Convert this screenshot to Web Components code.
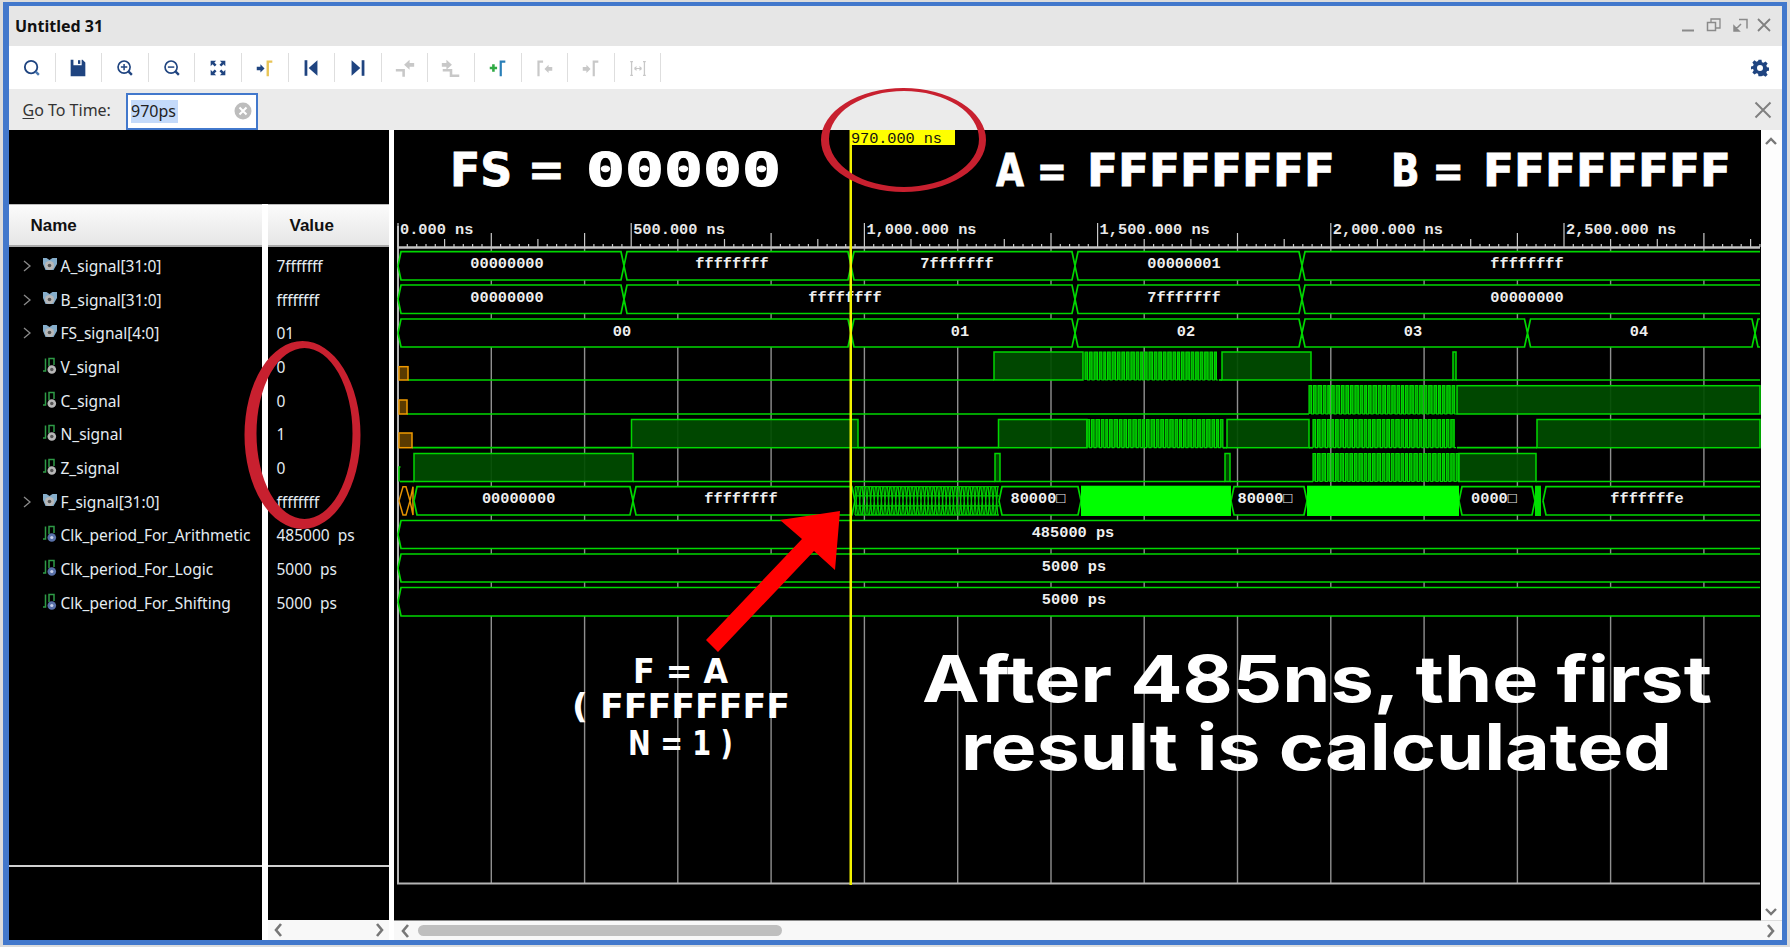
<!DOCTYPE html>
<html>
<head>
<meta charset="utf-8">
<title>Untitled 31</title>
<style>
  html, body { margin: 0; padding: 0; background: #dcdcdc; overflow: hidden; }
  body { font-family: "Noto Sans", "Open Sans", sans-serif; }
</style>
</head>
<body>
<wave-window>
  <title-bar slot="top">Untitled 31</title-bar>
  <tool-bar slot="top"></tool-bar>
  <goto-bar slot="top" value="970ps"></goto-bar>

  <signal-column heading="Name" pad="21.5" foot="75" slot="names">
    <signal-row kind="bus">A_signal[31:0]</signal-row>
    <signal-row kind="bus">B_signal[31:0]</signal-row>
    <signal-row kind="bus">FS_signal[4:0]</signal-row>
    <signal-row kind="bit">V_signal</signal-row>
    <signal-row kind="bit">C_signal</signal-row>
    <signal-row kind="bit">N_signal</signal-row>
    <signal-row kind="bit">Z_signal</signal-row>
    <signal-row kind="bus">F_signal[31:0]</signal-row>
    <signal-row kind="clk">Clk_period_For_Arithmetic</signal-row>
    <signal-row kind="clk">Clk_period_For_Logic</signal-row>
    <signal-row kind="clk">Clk_period_For_Shifting</signal-row>
  </signal-column>

  <signal-column heading="Value" pad="22" foot="55" scroll slot="values">
    <signal-row>7fffffff</signal-row>
    <signal-row>ffffffff</signal-row>
    <signal-row>01</signal-row>
    <signal-row>0</signal-row>
    <signal-row>0</signal-row>
    <signal-row>1</signal-row>
    <signal-row>0</signal-row>
    <signal-row>ffffffff</signal-row>
    <signal-row>485000 ps</signal-row>
    <signal-row>5000 ps</signal-row>
    <signal-row>5000 ps</signal-row>
  </signal-column>

  <wave-view slot="wave"></wave-view>
</wave-window>

<script>
const NAVY = '#1f4480';
const GREY_ICON = '#c8c8c8';

// every toolbar glyph lives in a 24x24 box
const TOOL_ICONS = {
    search: `<circle cx="11" cy="11" r="6.8" fill="none" stroke="${NAVY}" stroke-width="2"/><path d="M16 16l3.5 3.5" stroke="#4a78b0" stroke-width="2.6"/>`,
    save: `<path d="M4 3h3v6h9V3h1l3 3v15H4z" fill="${NAVY}"/><rect x="12" y="3.5" width="2.5" height="4" fill="${NAVY}"/>`,
    zoomIn: `<circle cx="11" cy="11" r="6.6" fill="none" stroke="${NAVY}" stroke-width="1.8"/><path d="M11 7.5v7M7.5 11h7" stroke="${NAVY}" stroke-width="1.6"/><path d="M16 16l3.5 3.5" stroke="${NAVY}" stroke-width="2.6"/>`,
    zoomOut: `<circle cx="11" cy="11" r="6.6" fill="none" stroke="${NAVY}" stroke-width="1.8"/><path d="M7.5 11h7" stroke="${NAVY}" stroke-width="1.6"/><path d="M16 16l3.5 3.5" stroke="${NAVY}" stroke-width="2.6"/>`,
    fit: `<g fill="${NAVY}"><path d="M4 4h6l-2 2 2.4 2.4-2 2L6 8 4 10z"/><path d="M20 4h-6l2 2-2.4 2.4 2 2L18 8l2 2z"/><path d="M4 20h6l-2-2 2.4-2.4-2-2L6 16l-2-2z"/><path d="M20 20h-6l2-2-2.4-2.4 2-2L18 16l2-2z"/></g>`,
    marker: `<path d="M3 10.5h4V8l4.5 4.5L7 17v-2.5H3z" fill="${NAVY}"/><path d="M15 21V5h5" fill="none" stroke="#e8c456" stroke-width="2.6"/>`,
    prev: `<rect x="5" y="3.5" width="3" height="17" fill="${NAVY}"/><path d="M19 3.5v17L9.5 12z" fill="${NAVY}"/>`,
    next: `<rect x="16" y="3.5" width="3" height="17" fill="${NAVY}"/><path d="M5 3.5v17l9.5-8.500z" fill="${NAVY}"/>`,
    risePrev: `<path d="M2 14.500h8.500v7" fill="none" stroke="${GREY_ICON}" stroke-width="2.800"/><path d="M22 6.500h-5V3l-6 5.500 6 5.500v-3.500h5z" fill="${GREY_ICON}"/>`,
    riseNext: `<path d="M3 14.500h9v6h9" fill="none" stroke="${GREY_ICON}" stroke-width="2.800"/><path d="M2 6.500h5V3l6 5.500L7 14v-3.500H2z" fill="${GREY_ICON}"/>`,
    addMarker: `<path d="M3 12h8M7 8v8" stroke="#2faa44" stroke-width="2.8"/><path d="M15 21V5h5" fill="none" stroke="#2a7fb8" stroke-width="2.4"/>`,
    markPrev: `<path d="M6 21V5h5" fill="none" stroke="${GREY_ICON}" stroke-width="2.4"/><path d="M21 11h-4V8.500L12.500 13 17 17.500V15h4z" fill="${GREY_ICON}"/>`,
    markNext: `<path d="M3 11h4V8.500l4.500 4.500L7 17.500V15H3z" fill="${GREY_ICON}"/><path d="M15 21V5h5" fill="none" stroke="${GREY_ICON}" stroke-width="2.4"/>`,
    span: `<path d="M5 5v15M19 5v15M3.500 5h3M3.500 20h3M17.500 5h3M17.500 20h3" stroke="${GREY_ICON}" stroke-width="1.4" fill="none"/><path d="M8 12.500h8M8 12.500l2.500-2M8 12.500l2.500 2M16 12.500l-2.500-2M16 12.500l-2.500 2" stroke="${GREY_ICON}" stroke-width="1.2" fill="none"/>`
};

class WaveWindow extends HTMLElement {
    connectedCallback() {
        const root = this.attachShadow({ mode: 'open' });
        root.innerHTML = `
            <style>
              :host { display: block; box-sizing: border-box; width: 1784px; height: 943px; margin: 2px 0 0 3px;
                      position: relative; border: solid #4278cc; border-width: 4px 5px 5px 6.5px; background: #fff; }
              .frame { display: flex; flex-direction: column; height: 100%; }
              .main { flex: 1; display: flex; min-height: 0; background: #fff; }
              .gap { width: 5px; flex: none; }
              /* name and value panes share one black block above their headers */
              .gap.joined { width: 6px; background: linear-gradient(#000 74px, #fff 74px); }
              .vbar { width: 20.500px; flex: none; display: flex; flex-direction: column; align-items: center;
                      background: #fdfdfd; box-sizing: border-box; padding-top: 5px; }
              .vbar svg { display: block; flex: none; }
              .down { margin-top: auto; margin-bottom: 2px; }
              .corner { height: 20px; flex: none; width: 100%; display: flex; align-items: center; justify-content: center;
                        border-top: 1px solid #ddd; box-sizing: border-box; background: #f8f8f8; }
              .marks { position: absolute; left: -9.5px; top: -6px; pointer-events: none; }
            </style>
            <div class="frame">
              <slot name="top"></slot>
              <div class="main">
                <slot name="names"></slot>
                <div class="gap joined"></div>
                <slot name="values"></slot>
                <div class="gap"></div>
                <slot name="wave"></slot>
                <div class="vbar">
                  <svg width="14" height="12"><path d="M2 9l5-5 5 5" fill="none" stroke="#777" stroke-width="2.4"/></svg>
                  <svg class="down" width="14" height="12"><path d="M2 3l5 5 5-5" fill="none" stroke="#777" stroke-width="2.4"/></svg>
                  <div class="corner"><svg width="12" height="16"><path d="M3 2l5 6-5 6" fill="none" stroke="#777" stroke-width="2.600"/></svg></div>
                </div>
              </div>
            </div>
            <!-- the red hand drawn rings sit over all the panels -->
            <svg class="marks" width="1790" height="947">
              <path fill="#c8202f" fill-rule="evenodd" d="M821 140a82.500 52 0 1 0 165 0a82.500 52 0 1 0-165 0zM829 139a75 48 0 1 1 150 0a75 48 0 1 1-150 0z"/>
              <path fill="#c8202f" fill-rule="evenodd" d="M244.500 435a58 94 0 1 0 116 0a58 94 0 1 0-116 0zM256.500 433.500a48 85.500 0 1 1 96 0a48 85.500 0 1 1-96 0z"/>
            </svg>`;
    }
}

class TitleBar extends HTMLElement {
    connectedCallback() {
        const root = this.attachShadow({ mode: 'open' });
        root.innerHTML = `
            <style>
              :host { display: flex; align-items: center; height: 40px; background: #e6e6e6; padding: 0 8px 0 6px; }
              .name { flex: 1; font: 700 16px "Noto Sans", sans-serif; color: #111; margin-top: -1px; }
              .ctl { display: flex; gap: 7.300px; margin-right: 0; }
              svg { display: block; }
            </style>
            <div class="name"><slot></slot></div>
            <div class="ctl">
              <svg width="18" height="18"><path d="M2 13.500h12" stroke="#8a8a8a" stroke-width="2"/></svg>
              <svg width="18" height="18"><path d="M6 5V2h9v9h-4" fill="none" stroke="#8a8a8a" stroke-width="1.300"/><rect x="2.500" y="5.500" width="8" height="8" fill="none" stroke="#8a8a8a" stroke-width="1.500"/></svg>
              <svg width="18" height="18"><path d="M8 2.500h8v9" fill="none" stroke="#8a8a8a" stroke-width="1.500"/><path d="M3 14l7-7M3 14v-5l5 5z" fill="#8a8a8a" stroke="#8a8a8a" stroke-width="1.500"/></svg>
              <svg width="18" height="18"><path d="M2 2l12 12M14 2L2 14" stroke="#808080" stroke-width="1.800"/></svg>
            </div>`;
    }
}

class ToolBar extends HTMLElement {
    connectedCallback() {
        const root = this.attachShadow({ mode: 'open' });
        const names = Object.keys(TOOL_ICONS);
        root.innerHTML = `
            <style>
              :host { display: flex; align-items: center; height: 43px; background: #fff; padding-left: 0;
                      justify-content: space-between; padding-right: 13.500px; }
              .tools { display: flex; }
              .tool { width: 46.600px; height: 29px; box-sizing: border-box; border-right: 1.500px solid #dedede;
                      display: flex; align-items: center; justify-content: center; }
              svg { display: block; }
            </style>
            <div class="tools">
              ${names.map(n => `<div class="tool"><svg width="22" height="22" viewBox="0 0 24 24">${TOOL_ICONS[n]}</svg></div>`).join('')}
            </div>
            <svg width="18" height="18" viewBox="0 0 24 24"><path fill="${NAVY}" fill-rule="evenodd" d="M10 1h4l.6 3.200 2.100.9 2.700-1.800 2.800 2.800-1.800 2.700.9 2.100 3.200.6v4l-3.200.6-.9 2.100 1.800 2.700-2.800 2.800-2.700-1.800-2.100.9L14 23h-4l-.6-3.200-2.100-.9-2.700 1.800-2.800-2.800 1.800-2.700-.9-2.100L-.5 14v-4l3.200-.6.9-2.100-1.800-2.700 2.800-2.800 2.700 1.800 2.100-.9zM12 8a4 4 0 1 0 0 8a4 4 0 1 0 0-8z"/></svg>`;
    }
}

class GotoBar extends HTMLElement {
    connectedCallback() {
        const root = this.attachShadow({ mode: 'open' });
        root.innerHTML = `
            <style>
              :host { display: flex; align-items: center; height: 41px; box-sizing: border-box; background: #ebebeb;
                      padding-left: 13.500px; padding-right: 9px; font: 16px "Noto Sans", sans-serif; color: #333; }
              u { text-underline-offset: 2px; }
              .lbl { width: 103px; }
              .box { box-sizing: border-box; width: 132px; height: 37px; margin-top: 3px; border: 2.500px solid #4278cc; background: #fff;
                     display: flex; align-items: center; padding-left: 3.500px; color: #222; }
              .sel { background: #c4dafa; width: 47px; height: 23px; line-height: 23px; flex: none; }
              .clr { margin-left: auto; margin-right: 3.500px; display: block; }
              .x { margin-left: auto; display: block; margin-right: 0; }
            </style>
            <span class="lbl"><u>G</u>o To Time:</span>
            <div class="box">
              <span class="sel">${this.getAttribute('value')}</span>
              <svg class="clr" width="18" height="18"><circle cx="9" cy="9" r="8.500" fill="#bdbdbd"/><path d="M5.500 5.500l7 7M12.500 5.500l-7 7" stroke="#fff" stroke-width="2"/></svg>
            </div>
            <svg class="x" width="20" height="20"><path d="M2.500 2.500l15 15M17.500 2.500l-15 15" stroke="#808080" stroke-width="2"/></svg>`;
    }
}

class SignalColumn extends HTMLElement {
    connectedCallback() {
        const root = this.attachShadow({ mode: 'open' });
        const withScroll = this.hasAttribute('scroll');
        const width = this.getAttribute('heading') === 'Name' ? 252.5 : 121;
        root.innerHTML = `
            <style>
              :host { display: flex; flex-direction: column; flex: none; width: ${width}px; height: 100%; background: #000;
                      word-spacing: ${withScroll ? 4 : 0}px; }
              .blank { height: 74px; flex: none; }
              .head { height: 43px; flex: none; box-sizing: border-box; display: flex; align-items: center; padding-top: 1px;
                      padding-left: ${this.getAttribute('pad')}px;
                      background: linear-gradient(#fbfbfb, #e6e6e6); border-top: 1px solid #bbb; border-bottom: 2px solid #a9a9a9;
                      font: 700 17px "Liberation Sans", sans-serif; color: #111; }
              .rows { flex: 1; padding-top: 2px; min-height: 0; }
              .foot { height: ${this.getAttribute('foot')}px; flex: none; box-sizing: border-box; border-top: 2px solid #d0d0d0; }
              .hbar { height: 20px; flex: none; background: #f8f8f8; display: flex; justify-content: space-between;
                      align-items: center; padding: 0 3px 0 4px; }
              svg { display: block; }
            </style>
            <div class="blank"></div>
            <div class="head">${this.getAttribute('heading')}</div>
            <div class="rows"><slot></slot></div>
            <div class="foot"></div>
            ${withScroll ? `<div class="hbar">
              <svg width="12" height="16"><path d="M9 2L4 8l5 6" fill="none" stroke="#777" stroke-width="2.600"/></svg>
              <svg width="12" height="16"><path d="M3 2l5 6-5 6" fill="none" stroke="#777" stroke-width="2.600"/></svg>
            </div>` : ''}`;
    }
}

class SignalRow extends HTMLElement {
    connectedCallback() {
        const root = this.attachShadow({ mode: 'open' });
        const kind = this.getAttribute('kind');
        let lead = '';
        if (kind) {
            const chevron = kind === 'bus'
                ? '<svg width="10" height="14"><path d="M2 2l6 5-6 5" fill="none" stroke="#8a8a8a" stroke-width="1.300"/></svg>'
                : '<svg width="10" height="14"></svg>';
            lead = `${chevron}<span class="ico">${this.iconFor(kind)}</span>`;
        }
        root.innerHTML = `
            <style>
              :host { display: flex; align-items: center; height: 33.700px; color: #e4ecf2;
                      font: 15.500px "Noto Sans", sans-serif; white-space: nowrap;
                      padding-left: ${kind ? 12.5 : 9}px; }
              svg { display: block; }
              .ico { margin: -2px 3px 0 10px; }
            </style>
            ${lead}<slot></slot>`;
    }

    iconFor(kind) {
        if (kind === 'bus') {
            return `<svg width="16" height="16"><path d="M1 1h3.500l3 2 3-2H15v6l-3.500 6h-8L1 7z" fill="#86aecb"/><circle cx="7.500" cy="8.500" r="4.600" fill="#b8b8b8"/><circle cx="7.500" cy="8.500" r="1.800" fill="#555"/></svg>`;
        }
        const dot = kind === 'clk'
            ? '<circle cx="9.800" cy="12.500" r="4.300" fill="#5870a8"/><circle cx="9.800" cy="12.500" r="1.600" fill="#c8d0e8"/>'
            : '<circle cx="9.800" cy="12.500" r="4.300" fill="#b8b8b8"/><circle cx="9.800" cy="12.500" r="1.700" fill="#555"/>';
        return `<svg width="16" height="18"><path d="M1 14h2.500V1.500M7 9V1.500h5V8" fill="none" stroke="#2e9a46" stroke-width="1.500"/>${dot}</svg>`;
    }
}

// All coordinates below are page pixels: the svg viewBox starts where the panel does
const T0 = 398;
const PX_PER_NS = 0.4664;
const PLOT_RIGHT = 1760;
const GREEN = '#00d800';
const DARK = '#004d00';

const ROWS = {
    A: [251.7, 280], B: [285, 313.5], FS: [319, 347],
    V: [352, 380], C: [385.7, 414], N: [419.5, 447.7], Z: [453.5, 481.5],
    F: [486.7, 515], C1: [520.5, 548.5], C2: [554, 582], C3: [587.5, 616]
};

class WaveView extends HTMLElement {
    connectedCallback() {
        const root = this.attachShadow({ mode: 'open' });
        const fit = 'lengthAdjust="spacingAndGlyphs"';
        root.innerHTML = `
            <style>
              :host { display: flex; flex-direction: column; flex: none; width: 1367.500px; height: 100%; background: #000; }
              svg.plot { display: block; flex: none; }
              .mono { font: 700 15.300px "Liberation Mono", monospace; fill: #e8e8e8; }
              .cur { font: 15.300px "Liberation Mono", monospace; fill: #111; }
              .val { font: 700 15.300px "Liberation Mono", monospace; fill: #efefef; text-anchor: middle; }
              .big { font: 700 44px "DejaVu Sans", sans-serif; fill: #fff; stroke: #fff; stroke-width: .8px; }
              .big1 { font: 700 47px "DejaVu Sans", sans-serif; fill: #fff; stroke: #fff; stroke-width: .8px; }
              .big0 { font: 700 47px "DejaVu Sans Mono", monospace; fill: #fff; stroke: #fff; stroke-width: 1.200px; }
              .note { font: 700 64px "Inter", sans-serif; fill: #fff; }
              .small { font: 700 34px "DejaVu Sans", sans-serif; fill: #fff; }
              .hbar { height: 20px; flex: none; display: flex; align-items: center; background: #f8f8f8;
                      border-top: 1px solid #8a8a8a; box-sizing: border-box; padding-left: 5px; }
              .thumb { width: 364px; height: 11px; border-radius: 6px; background: #bfbfbf; margin-left: 7px; }
            </style>
            <svg class="plot" width="1368" height="790" viewBox="394 130 1368 790">
              ${this.axis()}
              ${this.bus('A', [[398,624,'00000000',507],[624,851,'ffffffff',732],[851,1075,'7fffffff',957],[1075,1302,'00000001',1184],[1302,1760,'ffffffff',1527]])}
              ${this.bus('B', [[398,624,'00000000',507],[624,1075,'ffffffff',845],[1075,1302,'7fffffff',1184],[1302,1760,'00000000',1527]])}
              ${this.bus('FS', [[398,851,'00',622],[851,1075,'01',960],[1075,1302,'02',1186],[1302,1527.500,'03',1413],[1527.500,1755,'04',1639],[1755,1760,'',0]])}
              ${this.digital('V', [[408,994,'l'],[994,1083,'h'],[1085,1219,'d'],[1219,1222,'l'],[1222,1311,'h'],[1311,1453,'l'],[1453,1456,'h'],[1456,1760,'l']], [399,408,366.700])}
              ${this.digital('C', [[407,1309,'l'],[1309,1457,'d'],[1457,1760,'h']], [399,407,400])}
              ${this.digital('N', [[412,631.500,'l'],[631.500,858,'h'],[858,998.500,'l'],[998.500,1087,'h'],[1087,1223,'d'],[1223,1227,'l'],[1227,1309,'h'],[1309,1313,'l'],[1313,1457,'d'],[1457,1537,'l'],[1537,1760,'h']], [399,412,433])}
              ${this.digital('Z', [[400,414,'l'],[414,633,'h'],[633,995,'l'],[995,1000,'h'],[1000,1225,'l'],[1225,1230,'h'],[1230,1313,'l'],[1313,1459,'d'],[1459,1536,'h'],[1536,1760,'l']])}
              <path d="M399 481.500V467h1.500" fill="none" stroke="${GREEN}" stroke-width="1.600"/>
              ${this.fRow()}
              ${this.bus('C1', [[398,1760,'485000 ps',1073]])}
              ${this.bus('C2', [[398,1760,'5000 ps',1074]])}
              ${this.bus('C3', [[398,1760,'5000 ps',1074]])}
              <rect x="849.500" y="130" width="2.500" height="755" fill="#f2f200"/>
              <rect x="850" y="130" width="105" height="15" fill="#ffff00"/>
              <text class="cur" x="851" y="142.500" textLength="91">970.000 ns</text>

              <text y="186"><tspan class="big1" x="450" textLength="115" ${fit}>FS =</tspan> <tspan class="big0" x="586" textLength="195" ${fit}>00000</tspan></text>
              <text y="186"><tspan class="big" x="996" textLength="71" ${fit}>A =</tspan> <tspan class="big" x="1087" textLength="248" ${fit}>FFFFFFFF</tspan></text>
              <text y="186"><tspan class="big" x="1391" textLength="73" ${fit}>B =</tspan> <tspan class="big" x="1483" textLength="248" ${fit}>FFFFFFFF</tspan></text>

              <polygon fill="#ff0000" points="840,511 780,520 802,539 706,640 718,652 814,551 835,570"/>
              <text class="small" x="633" y="683" textLength="95" ${fit}>F = A</text>
              <text class="small" x="572" y="718" textLength="218" ${fit}>( FFFFFFFF</text>
              <text class="small" x="628" y="755" textLength="105" ${fit}>N = 1 )</text>

              <text class="note" x="922" y="702" textLength="790" ${fit}>After 485ns, the first</text>
              <text class="note" x="961" y="770" textLength="711" ${fit}>result is calculated</text>
            </svg>
            <div class="hbar">
              <svg width="12" height="16"><path d="M9 2L4 8l5 6" fill="none" stroke="#777" stroke-width="2.600"/></svg>
              <div class="thumb"></div>
            </div>`;
    }

    axis() {
        let grid = '', ticks = '', labels = '';
        for (let x = T0 + 93.28; x < PLOT_RIGHT; x += 93.28) {
            grid += `M${x.toFixed(1)} 248V883`;
        }
        const tall = [200, 400, 800, 1400, 1800, 2400, 2800];
        for (let ns = 0; ns <= 2920; ns += 20) {
            const x = (T0 + ns * PX_PER_NS).toFixed(1);
            let h = 3;
            if (ns % 500 === 0) h = 24;
            else if (tall.includes(ns)) h = 14;
            else if (ns % 100 === 0) h = 8;
            ticks += `M${x} 247V${247 - h}`;
        }
        ['0.000 ns', '500.000 ns', '1,000.000 ns', '1,500.000 ns', '2,000.000 ns', '2,500.000 ns'].forEach((t, i) => {
            labels += `<text class="mono" x="${400 + i * 233.2}" y="234">${t}</text>`;
        });
        return `<path d="${grid}" stroke="#8f8f8f" stroke-width="1.400"/>
            <path d="M398 226V883.500H1760" fill="none" stroke="#b4b4b4" stroke-width="2"/>
            <path d="${ticks}" stroke="#c8c8c8" stroke-width="1.200"/>
            <path d="M398 247.500H1760" stroke="#c4c4c4" stroke-width="2.400"/>${labels}`;
    }

    // hexagon chain for a bus row, segment = [from, to, text, text centre]
    bus(row, segments) {
        const [top, bot] = ROWS[row];
        const mid = (top + bot) / 2;
        let fill = '', line = '', txt = '';
        segments.forEach(([a, b, label, cx]) => {
            const open = b >= PLOT_RIGHT;
            const right = open ? `H${b}` : `H${b - 3}L${b} ${mid}L${b - 3} ${bot}`;
            fill += `M${a} ${mid}L${a + 3} ${top}${open ? `H${b}V${bot}` : right}H${a + 3}Z`;
            line += `M${a} ${mid}L${a + 3} ${top}${right}${open ? `M${b} ${bot}` : ''}H${a + 3}L${a} ${mid}`;
            if (label) txt += `<text class="val" x="${cx}" y="${top + 16.5}">${label}</text>`;
        });
        return `<path d="${fill}" fill="#000"/><path d="${line}" fill="none" stroke="${GREEN}" stroke-width="1.700"/>${txt}`;
    }

    digital(row, parts, unknown) {
        const [top, bot] = ROWS[row];
        let shapes = '';
        parts.forEach(([a, b, type]) => {
            if (type === 'l') {
                shapes += `<path d="M${a} ${bot}H${b}" stroke="${GREEN}" stroke-width="1.700"/>`;
            } else if (type === 'h') {
                shapes += `<rect x="${a}" y="${top}" width="${b - a}" height="${bot - top}" fill="${DARK}" fill-opacity=".92" stroke="${GREEN}" stroke-width="1.500"/>`;
            } else {
                shapes += this.dense(a, b, top, bot);
            }
        });
        if (unknown) {
            const [a, b, y] = unknown;
            shapes += `<rect x="${a}" y="${y}" width="${b - a}" height="${bot - y}" fill="#5a3a00" stroke="#f09a00" stroke-width="1.500"/>`;
        }
        return shapes;
    }

    // fast toggling stretch, pulse widths vary a little like the real trace
    dense(a, b, top, bot) {
        const widths = [2.6, 2.6, 3.4, 2.6, 1.9, 2.6, 3.4, 2.6];
        let x = a, i = 0, fills = '', d = `M${a} ${bot}`;
        while (x < b - 1) {
            const w = widths[i % widths.length];
            fills += `<rect x="${x}" y="${top}" width="${w}" height="${bot - top}" fill="#00a800"/>`;
            d += `V${top}h${w}V${bot}h1.9`;
            x += w + 1.9;
            i++;
        }
        return `${fills}<path d="${d}" fill="none" stroke="${GREEN}" stroke-width="1.200"/>`;
    }

    fRow() {
        const [top, bot] = ROWS.F;
        const mid = (top + bot) / 2;
        let lattice = `M855 ${top}H999M855 ${bot}H999M855 ${mid - 5}H999M855 ${mid + 5}H999`;
        for (let x = 855; x < 997; x += 3.6) {
            lattice += `M${x.toFixed(1)} ${top}L${(x + 2.4).toFixed(1)} ${bot}M${(x + 2.4).toFixed(1)} ${top}L${x.toFixed(1)} ${bot}`;
        }
        return `
            <path d="M399 ${mid}L403 ${top}H406L410 ${mid}L406 ${bot}H403ZM410 ${mid}L413 ${top}V${bot}Z" fill="none" stroke="#e89400" stroke-width="1.500"/>
            ${this.bus('F', [
                [414, 633, '00000000', 518.6],
                [633, 855, 'ffffffff', 741],
                [999, 1081, '80000\u25A1', 1038],
                [1231, 1307, '80000\u25A1', 1265],
                [1459, 1535, '0000\u25A1', 1494],
                [1543, 1760, 'fffffffe', 1647]
            ])}
            <path d="${lattice}" fill="none" stroke="#00c800" stroke-width="1.300"/>
            <rect x="1081" y="${top - 1}" width="150" height="${bot - top + 2}" fill="#00ff00"/>
            <rect x="1307" y="${top - 1}" width="152" height="${bot - top + 2}" fill="#00ff00"/>
            <rect x="1535" y="${top - 1}" width="6" height="${bot - top + 2}" fill="#00e000"/>`;
    }
}

customElements.define('wave-window', WaveWindow);
customElements.define('title-bar', TitleBar);
customElements.define('tool-bar', ToolBar);
customElements.define('goto-bar', GotoBar);
customElements.define('signal-column', SignalColumn);
customElements.define('signal-row', SignalRow);
customElements.define('wave-view', WaveView);
</script>
</body>
</html>
